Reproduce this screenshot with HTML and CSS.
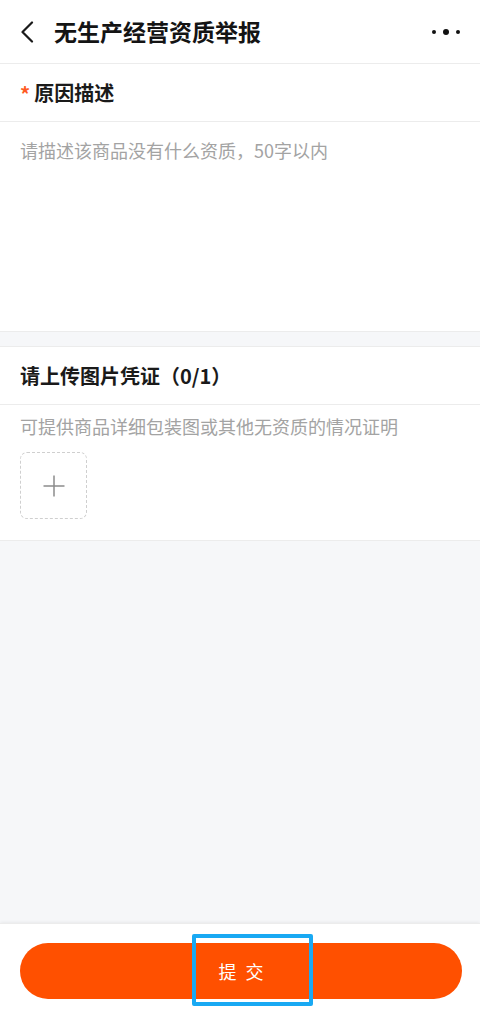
FILE: index.html
```html
<!DOCTYPE html>
<html lang="zh-CN">
<head>
<meta charset="utf-8">
<title>无生产经营资质举报</title>
<link rel="stylesheet" href="styles.css">
</head>
<body>
<div class="page">
  <header class="nav">
    <svg class="back" width="14" height="22" viewBox="0 0 14 22"><path d="M12 1.5 L2.5 11 L12 20.5" fill="none" stroke="#1a1a1a" stroke-width="2.2" stroke-linecap="round" stroke-linejoin="round"/></svg>
    <h1 class="title">无生产经营资质举报</h1>
    <div class="more"><span class="dot"></span><span class="dot big"></span><span class="dot"></span></div>
  </header>

  <main class="main">
    <section class="card">
      <div class="card-head"><span class="star">*</span>原因描述</div>
      <div class="textarea">请描述该商品没有什么资质，50字以内</div>
    </section>

    <section class="card card-upload">
      <div class="card-head">请上传图片凭证（0/1）</div>
      <div class="hint">可提供商品详细包装图或其他无资质的情况证明</div>
      <div class="upload">
        <svg width="22" height="22" viewBox="0 0 22 22"><path d="M11 0.5 V21.5 M0.5 11 H21.5" stroke="#8c8c8c" stroke-width="1.5"/></svg>
      </div>
    </section>
  </main>

  <footer class="footer">
    <div class="submit">提交</div>
  </footer>
  <div class="mark"></div>
</div>
</body>
</html>
```

FILE: styles.css
```css
* { box-sizing: border-box; }
html, body { margin: 0; padding: 0; }
body {
  font-family: "Noto Sans CJK SC", "Noto Sans", sans-serif;
  background: #f6f7f9;
  color: #1a1a1a;
}
.page {
  position: relative;
  width: 480px;
  height: 1015px;
  display: flex;
  flex-direction: column;
  overflow: hidden;
}
.nav {
  height: 64px;
  flex: none;
  background: #fff;
  border-bottom: 1px solid #ececec;
  display: flex;
  align-items: center;
  padding: 0 18px 0 20px;
}
.back { flex: none; margin-top: 1px; }
.title {
  margin: 0 0 0 20px;
  font-size: 23px;
  font-weight: 700;
  color: #141414;
  flex: 1;
  line-height: 1;
}
.more {
  display: flex;
  align-items: center;
  gap: 7px;
  margin-right: 2px;
}
.dot {
  width: 4px; height: 4px;
  border-radius: 50%;
  background: #111;
}
.dot.big { width: 6px; height: 6px; }
.main {
  flex: 1;
  display: flex;
  flex-direction: column;
  gap: 14px;
}
.card {
  background: #fff;
  border-bottom: 1px solid #ececec;
}
.card-upload { border-top: 1px solid #ececec; padding-bottom: 21px; }
.card-head {
  height: 58px;
  border-bottom: 1px solid #ececec;
  display: flex;
  align-items: center;
  padding-left: 20px;
  font-size: 20px;
  font-weight: 700;
  color: #1a1a1a;
}
.star {
  color: #ff5a22;
  font-size: 20px;
  margin-right: 4px;
  margin-top: 2px;
}
.textarea {
  height: 209px;
  padding: 15px 20px 0;
  font-size: 18px;
  line-height: 26px;
  color: #a3a3a3;
}
.hint {
  padding: 8px 20px 0;
  font-size: 18px;
  line-height: 26px;
  color: #a3a3a3;
}
.upload {
  margin: 13px 0 0 20px;
  width: 67px;
  height: 67px;
  border: 1.5px dashed #cfcfcf;
  border-radius: 7px;
  display: flex;
  align-items: center;
  justify-content: center;
}
.footer {
  flex: none;
  height: 92px;
  background: #fff;
  box-shadow: 0 -1px 3px rgba(0,0,0,0.06);
  border-top: 1px solid #ececec;
  padding: 19px 18px 0 20px;
}
.submit {
  height: 56px;
  border-radius: 28px;
  background: #ff5000;
  color: #fff;
  font-size: 18px;
  letter-spacing: 9px;
  padding-left: 9px;
  display: flex;
  align-items: center;
  justify-content: center;
}
.mark {
  position: absolute;
  left: 192px;
  top: 934px;
  width: 121px;
  height: 72px;
  border: 4px solid #19a9f3;
  border-radius: 2px;
}
```
